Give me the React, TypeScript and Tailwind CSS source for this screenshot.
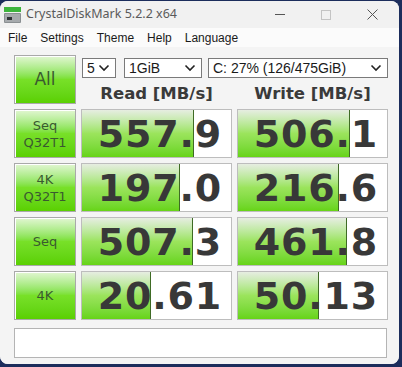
import React from "react";

type Row = {
  label: string[];
  read: string;
  readBar: number;
  write: string;
  writeBar: number;
};

const rows: Row[] = [
  { label: ["Seq", "Q32T1"], read: "557.9", readBar: 112, write: "506.1", writeBar: 112 },
  { label: ["4K", "Q32T1"], read: "197.0", readBar: 98, write: "216.6", writeBar: 101 },
  { label: ["Seq"], read: "507.3", readBar: 111, write: "461.8", writeBar: 109 },
  { label: ["4K"], read: "20.61", readBar: 69, write: "50.13", writeBar: 81 },
];

const Chevron = () => (
  <svg width="12" height="8" viewBox="0 0 12 8" className="shrink-0">
    <path d="M1.5 1.5 L6 6 L10.5 1.5" fill="none" stroke="#222" strokeWidth="1.6" />
  </svg>
);

const FakeSelect = ({ value, className }: { value: string; className: string }) => (
  <div
    className={`h-[20px] flex items-center justify-between bg-white border border-[#7a7a7a] pl-[4px] pr-[5px] font-['Liberation_Sans',sans-serif] text-[14px] text-[#1a1a1a] ${className}`}
  >
    <span className="leading-none">{value}</span>
    <Chevron />
  </div>
);

const GreenButton = ({ children, className = "" }: { children: React.ReactNode; className?: string }) => (
  <div
    className={`w-[62px] h-[49px] border border-[#a9a9a9] bg-gradient-to-b from-[#e2f6d2] via-[#78e028] to-[#5ad000] shadow-[inset_1px_1px_0_#ffffff] flex flex-col items-center justify-center text-[#3a5a30] ${className}`}
  >
    {children}
  </div>
);

const ValueBox = ({ value, bar }: { value: string; bar: number }) => (
  <div className="relative w-[151px] h-[49px] bg-white border border-[#bdbdbd] overflow-hidden flex items-center justify-end pr-[9px]">
    <div
      className="absolute left-0 top-0 bottom-0 bg-gradient-to-b from-[#e6ede1] via-[#9be45c] to-[#66d414] border-r border-r-[#3f6b25]"
      style={{ width: bar }}
    />
    <span className="relative font-['DejaVu_Sans',sans-serif] font-bold text-[38px] leading-none text-[#383838] tracking-[0.8px]">
      {value}
    </span>
  </div>
);

export default function App() {
  return (
    <div className="w-[402px] h-[367px] bg-[#1c2d5c] pt-[1px] overflow-hidden">
      <div className="w-[399px] h-[363px] bg-[#f3f3f3] rounded-[8px] overflow-hidden flex flex-col">
        {/* title bar */}
        <div className="h-[27px] bg-[#f1f1f1] flex items-center">
          <svg width="17" height="16" viewBox="0 0 17 16" className="ml-[4px]">
            <rect x="0" y="0" width="17" height="5" fill="#3cb43c" />
            <rect x="0" y="6" width="17" height="10" rx="1" fill="#8a8f92" />
            <rect x="1" y="7" width="15" height="8" fill="#a6aaad" />
            <rect x="3" y="10" width="5" height="3" fill="#2f3336" />
          </svg>
          <span className="ml-[5px] font-['Noto_Sans',sans-serif] text-[12.5px] text-[#5a5a5a]">
            CrystalDiskMark 5.2.2 x64
          </span>
          <div className="ml-auto flex items-center mr-[4px]">
            <div className="w-[46px] flex justify-center">
              <div className="w-[10px] h-[1px] bg-[#555]" />
            </div>
            <div className="w-[46px] flex justify-center">
              <div className="w-[10px] h-[10px] border border-[#c4c4c4]" />
            </div>
            <div className="w-[46px] flex justify-center">
              <svg width="11" height="11" viewBox="0 0 11 11">
                <path d="M0.5 0.5 L10.5 10.5 M10.5 0.5 L0.5 10.5" stroke="#555" strokeWidth="1" />
              </svg>
            </div>
          </div>
        </div>

        {/* menu bar */}
        <div className="h-[19px] bg-[#fbfbfb] flex items-center gap-[13px] pl-[8px] font-['Liberation_Sans',sans-serif] text-[12px] text-[#1a1a1a]">
          <span>File</span>
          <span>Settings</span>
          <span>Theme</span>
          <span>Help</span>
          <span>Language</span>
        </div>

        {/* client area */}
        <div className="flex-1 bg-[#f4f4f4] pt-[8px] pl-[14px] flex flex-col gap-[5px]">
          <div className="flex gap-[5px]">
            <GreenButton className="text-[17px] font-['DejaVu_Sans',sans-serif]">All</GreenButton>
            <div className="flex flex-col">
              <div className="flex items-center mt-[3px] ml-[1px]">
                <FakeSelect value="5" className="w-[34px]" />
                <FakeSelect value="1GiB" className="w-[78px] ml-[8px]" />
                <FakeSelect value="C: 27% (126/475GiB)" className="w-[180px] ml-[6px]" />
              </div>
              <div className="flex gap-[5px] mt-[6px] leading-[20px] font-['DejaVu_Sans',sans-serif] font-bold text-[16.5px] text-[#3a3a3a]">
                <div className="w-[151px] text-center">Read [MB/s]</div>
                <div className="w-[151px] text-center">Write [MB/s]</div>
              </div>
            </div>
          </div>

          {rows.map((r, i) => (
            <div key={i} className="flex gap-[5px]">
              <GreenButton className="font-['DejaVu_Sans',sans-serif] text-[13px] leading-[17px]">
                {r.label.map((l) => (
                  <span key={l}>{l}</span>
                ))}
              </GreenButton>
              <ValueBox value={r.read} bar={r.readBar} />
              <ValueBox value={r.write} bar={r.writeBar} />
            </div>
          ))}

          <div className="mt-[3px] w-[373px] h-[30px] bg-white border border-[#b4b4b4]" />
        </div>
      </div>
    </div>
  );
}
